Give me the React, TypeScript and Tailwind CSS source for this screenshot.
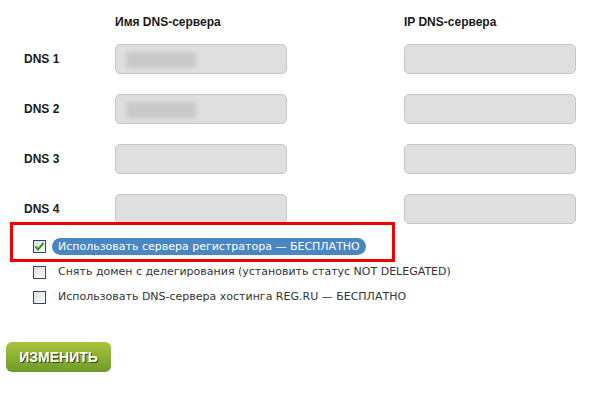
import React from 'react';

interface DnsRow {
  label: string;
  blurred: boolean;
}

const rows: DnsRow[] = [
  { label: 'DNS 1', blurred: true },
  { label: 'DNS 2', blurred: true },
  { label: 'DNS 3', blurred: false },
  { label: 'DNS 4', blurred: false },
];

const Field: React.FC<{ blurred?: boolean }> = ({ blurred = false }) => (
  <div className="relative w-[172px] h-[30px] rounded-[5px] border border-[#c6c6c6] bg-[#dfdfdf] overflow-hidden">
    {blurred && (
      <div className="absolute left-[10px] top-[7px] w-[70px] h-[16px] bg-[#c9c9c9] blur-[2px]" />
    )}
  </div>
);

const Check: React.FC<{ checked?: boolean }> = ({ checked = false }) => (
  <span className="relative w-[13px] h-[13px] shrink-0 border border-[#2c4b6e] bg-gradient-to-br from-[#dcdcdc] to-white">
    {checked && (
      <svg className="absolute -left-[1px] -top-[1px]" width="13" height="13" viewBox="0 0 13 13">
        <path d="M2.5 6.5 L5 9.5 L10.5 3" fill="none" stroke="#2e9a2e" strokeWidth="2" />
      </svg>
    )}
  </span>
);

export default function App() {
  return (
    <div className="relative w-[603px] h-[400px] bg-white text-[#1a1a1a] font-['DejaVu_Sans',sans-serif]">
      {/* column headers */}
      <div className="flex pt-[15px] text-[12px] font-bold leading-[14px] font-['Liberation_Sans',sans-serif]">
        <div className="ml-[115px] w-[289px]">Имя DNS-сервера</div>
        <div>IP DNS-сервера</div>
      </div>

      {/* DNS rows */}
      <div className="flex flex-col gap-[20px] mt-[15px]">
        {rows.map((r) => (
          <div key={r.label} className="flex items-center">
            <div className="w-[115px] pl-[24px] text-[12px] font-bold font-['Liberation_Sans',sans-serif]">{r.label}</div>
            <Field blurred={r.blurred} />
            <div className="w-[117px]" />
            <Field />
          </div>
        ))}
      </div>

      {/* options */}
      <div className="flex flex-col mt-[14px] text-[11px] text-[#333]">
        <label className="flex items-center h-[17px] pl-[33px] gap-[6px]">
          <Check checked />
          <span className="h-[17px] leading-[17px] px-[6px] rounded-full bg-[#4a86c4] text-white">
            Использовать сервера регистратора — БЕСПЛАТНО
          </span>
        </label>
        <label className="flex items-center h-[17px] mt-[9px] pl-[33px] gap-[12px]">
          <Check />
          <span>Снять домен с делегирования (установить статус NOT DELEGATED)</span>
        </label>
        <label className="flex items-center h-[17px] mt-[8px] pl-[33px] gap-[12px]">
          <Check />
          <span>Использовать DNS-сервера хостинга REG.RU — БЕСПЛАТНО</span>
        </label>
      </div>

      {/* highlight frame */}
      <div className="absolute left-[10px] top-[222px] w-[385px] h-[40px] border-[3px] border-[#f00000] pointer-events-none" />

      {/* submit */}
      <button className="ml-[6px] mt-[36px] w-[105px] h-[30px] rounded-[6px] bg-gradient-to-b from-[#a8c63c] to-[#6f9a28] text-white text-[14px] font-bold font-['Liberation_Sans',sans-serif] [text-shadow:1px_1px_0_#2f4a12]">
        ИЗМЕНИТЬ
      </button>
    </div>
  );
}
